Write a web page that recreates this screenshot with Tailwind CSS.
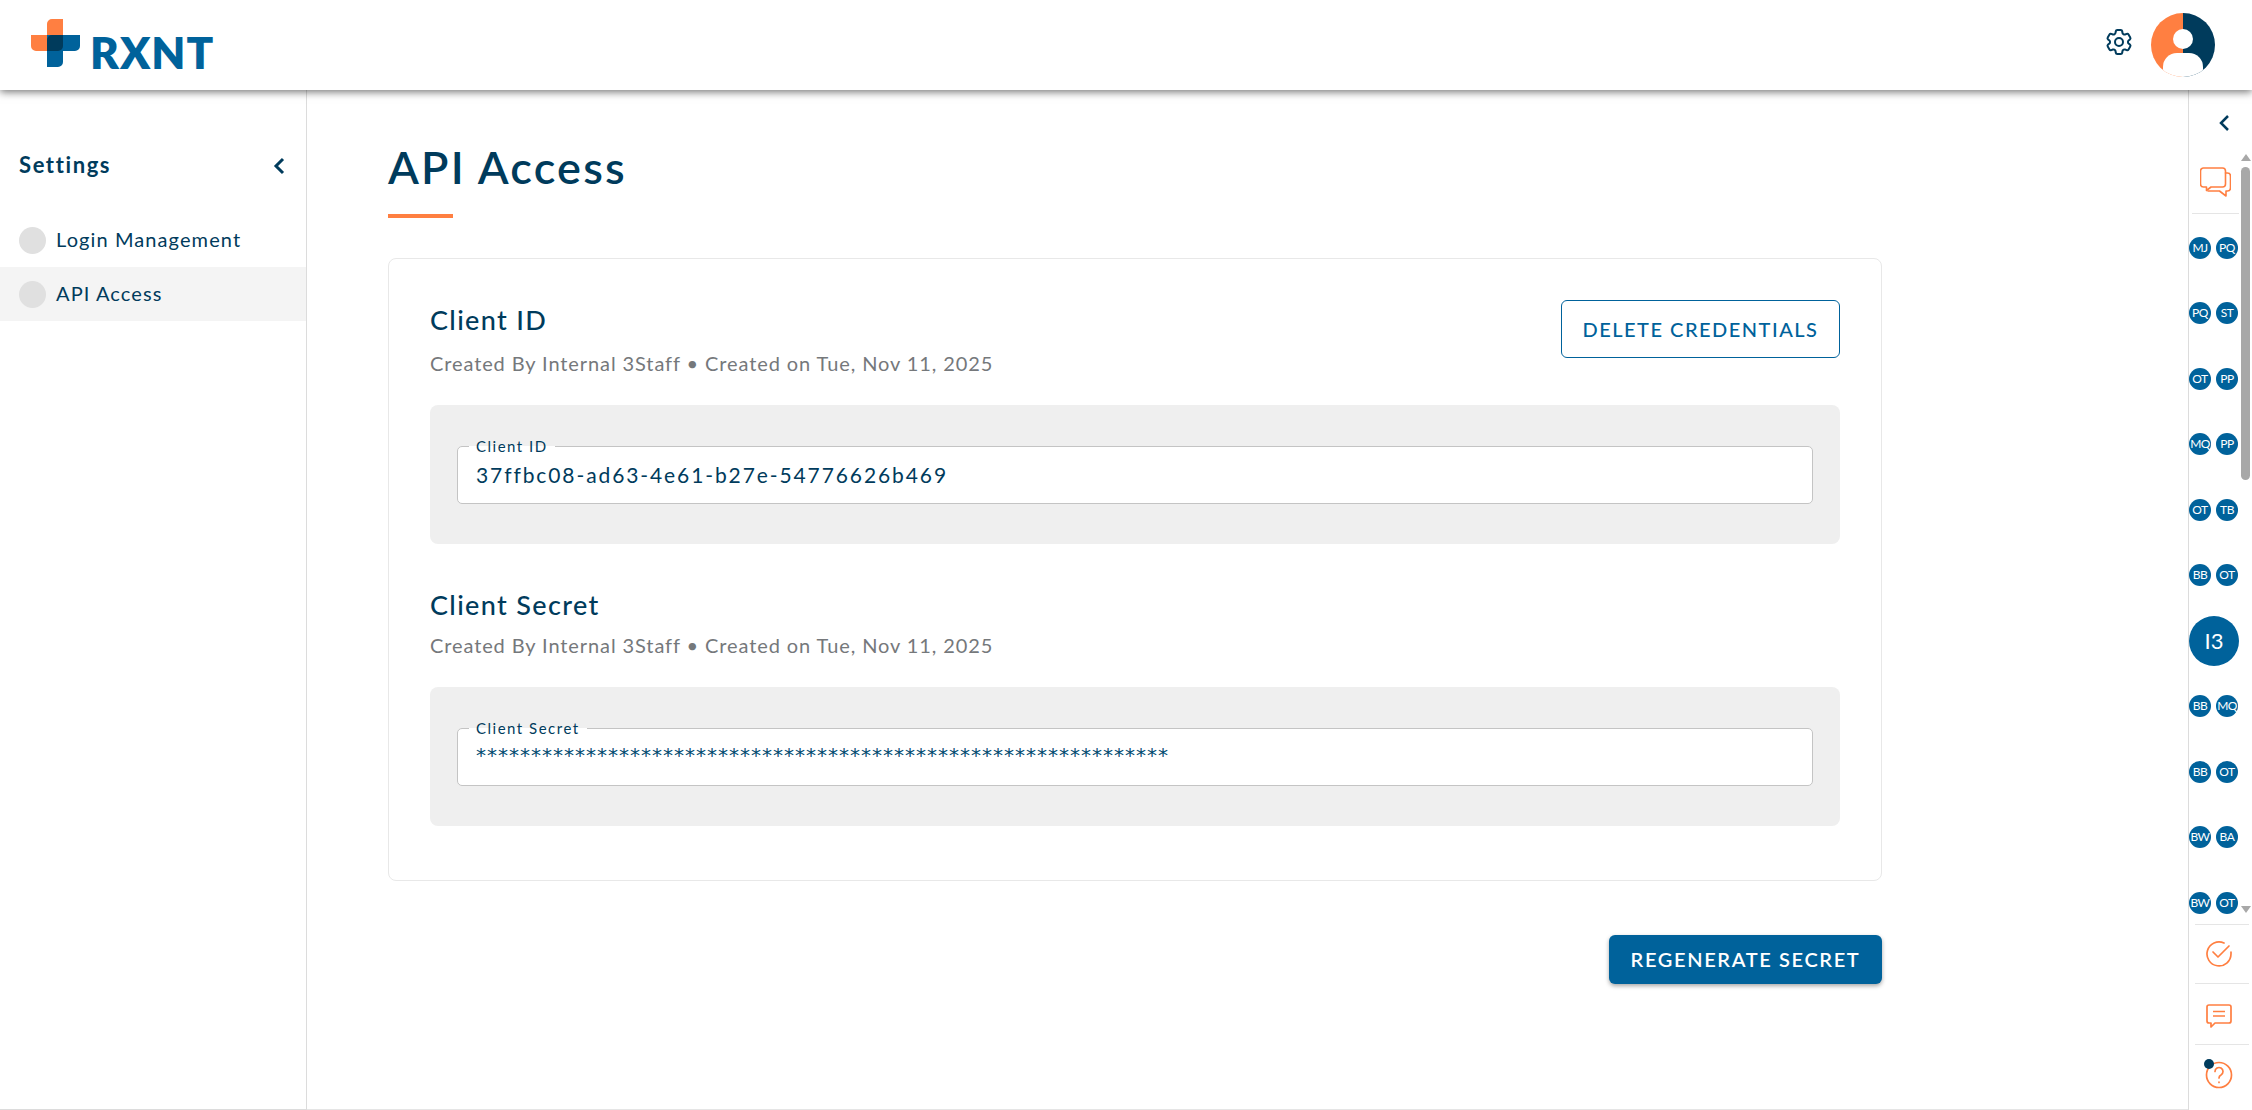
<!DOCTYPE html>
<html lang="en">
<head>
  <meta charset="UTF-8">
  <title>API Access</title>
  <script src="https://cdn.jsdelivr.net/npm/@tailwindcss/browser@4"></script>
</head>
<body class="h-[1110px] w-[2252px] overflow-hidden bg-white font-['Lato','Liberation_Sans',sans-serif] text-[#003b5c]">

  <!-- header -->
  <header class="relative z-10 flex h-[90px] items-center justify-between bg-white pl-[31px] pr-[38px] shadow-[0_2px_8px_rgba(0,0,0,0.55)]">
    <div class="flex items-center gap-[10px]">
      <svg width="49" height="48" viewBox="0 0 49 48" class="-mt-[4px]">
        <path d="M16 16V5a5 5 0 0 1 5-5h11v32H5a5 5 0 0 1-5-5V16z" fill="#ff7f41"/>
        <path d="M16 16h33v11a5 5 0 0 1-5 5H32v11a5 5 0 0 1-5 5H16z" fill="#00629b"/>
        <path d="M21 16h11v11a5 5 0 0 1-5 5H16V21a5 5 0 0 1 5-5z" fill="#003b5c"/>
      </svg>
      <span class="mt-[14px] text-[44px] leading-[44px] font-extrabold tracking-[1px] text-[#00629b]">RXNT</span>
    </div>
    <div class="flex items-center gap-[16px]">
      <svg width="32" height="32" viewBox="0 0 24 24" class="-mt-[6px]" fill="none" stroke="#003b5c" stroke-width="1.5" stroke-linecap="round" stroke-linejoin="round">
        <path d="M9.594 3.94c.09-.542.56-.94 1.11-.94h2.593c.55 0 1.02.398 1.11.94l.213 1.281c.063.374.313.686.645.87.074.04.147.083.22.127.325.196.72.257 1.075.124l1.217-.456a1.125 1.125 0 0 1 1.37.49l1.296 2.247a1.125 1.125 0 0 1-.26 1.431l-1.003.827c-.293.241-.438.613-.43.992a7.723 7.723 0 0 1 0 .255c-.008.378.137.75.43.991l1.004.827c.424.35.534.955.26 1.43l-1.298 2.247a1.125 1.125 0 0 1-1.369.491l-1.217-.456c-.355-.133-.75-.072-1.076.124a6.47 6.47 0 0 1-.22.128c-.331.183-.581.495-.644.869l-.213 1.281c-.09.543-.56.94-1.11.94h-2.594c-.55 0-1.019-.398-1.11-.94l-.213-1.281c-.062-.374-.312-.686-.644-.87a6.52 6.52 0 0 1-.22-.127c-.325-.196-.72-.257-1.076-.124l-1.217.456a1.125 1.125 0 0 1-1.369-.49l-1.297-2.247a1.125 1.125 0 0 1 .26-1.431l1.004-.827c.292-.24.437-.613.43-.991a6.932 6.932 0 0 1 0-.255c.007-.38-.138-.751-.43-.992l-1.004-.827a1.125 1.125 0 0 1-.26-1.43l1.297-2.247a1.125 1.125 0 0 1 1.37-.491l1.216.456c.356.133.751.072 1.076-.124.072-.044.146-.086.22-.128.332-.183.582-.495.644-.869l.214-1.28Z"/>
        <path d="M15 12a3 3 0 1 1-6 0 3 3 0 0 1 6 0Z"/>
      </svg>
      <svg width="64" height="64" viewBox="0 0 64 64" class="-mr-[1px]">
        <defs><clipPath id="av"><circle cx="32" cy="32" r="32"/></clipPath></defs>
        <g clip-path="url(#av)">
          <rect width="32" height="64" fill="#ff7f41"/>
          <rect x="32" width="32" height="64" fill="#003b5c"/>
          <circle cx="32" cy="26" r="10" fill="#fff"/>
          <rect x="12" y="40" width="40" height="30" rx="14" fill="#fff"/>
        </g>
      </svg>
    </div>
  </header>

  <div class="flex h-[1020px]">
    <!-- left nav -->
    <aside class="w-[307px] shrink-0 border-r border-b border-[#dcdcdc]">
      <div class="flex h-[123px] items-start justify-between pl-[19px] pr-[21px] pt-[61px]">
        <span class="text-[22px] leading-[28px] font-bold tracking-[1.6px]">Settings</span>
        <svg width="12" height="18" viewBox="0 0 12 18" class="mt-[6px]" fill="none" stroke="#003b5c" stroke-width="3"><path d="M10 2 3 9l7 7"/></svg>
      </div>
      <nav class="text-[20px] tracking-[1.1px]">
        <a class="flex h-[54px] items-center gap-[10px] pb-[2px] pl-[19px]"><span class="mt-[2px] size-[27px] rounded-full bg-[#e0e0e0]"></span>Login Management</a>
        <a class="flex h-[54px] items-center gap-[10px] bg-[#f4f4f4] pb-[2px] pl-[19px]"><span class="mt-[2px] size-[27px] rounded-full bg-[#e0e0e0]"></span>API Access</a>
      </nav>
    </aside>

    <!-- main -->
    <main class="flex w-[1881px] shrink-0 flex-col border-b border-[#e5e5e5] pl-[81px] pr-[306px]">
      <h1 class="mt-[50px] text-[45px] leading-[54px] font-semibold tracking-[2.2px]">API Access</h1>
      <div class="mt-[20px] h-[4px] w-[65px] bg-[#ff7f41]"></div>

      <section class="mt-[40px] h-[623px] rounded-[8px] border border-[#e8e8e8] px-[41px] pt-[41px]">
        <div class="flex justify-between">
          <div>
            <h2 class="mt-[2px] text-[27px] leading-[36px] font-medium tracking-[1.35px]">Client ID</h2>
            <p class="mt-[11px] text-[20px] leading-[28px] tracking-[0.9px] text-[#75787b]">Created By Internal 3Staff • Created on Tue, Nov 11, 2025</p>
          </div>
          <button class="h-[58px] w-[279px] rounded-[6px] border border-[#00629b] text-[20px] font-medium tracking-[1.5px] text-[#00629b]">DELETE CREDENTIALS</button>
        </div>
        <div class="mt-[28px] flex h-[139px] flex-col justify-center rounded-[8px] bg-[#efefef] px-[27px]">
          <div class="relative flex h-[58px] items-center rounded-[5px] border border-[#c4c4c4] bg-white px-[18px]">
            <label class="absolute -top-[9px] left-[11px] h-[16px] bg-[linear-gradient(to_bottom,#efefef_50%,#fff_50%)] px-[7px] text-[15px] leading-[16px] tracking-[1.5px]">Client ID</label>
            <div class="text-[21px] leading-[28px] tracking-[1.9px]">37ffbc08-ad63-4e61-b27e-54776626b469</div>
          </div>
        </div>

        <h2 class="mt-[43px] text-[27px] leading-[36px] font-medium tracking-[1.35px]">Client Secret</h2>
        <p class="mt-[8px] text-[20px] leading-[28px] tracking-[0.9px] text-[#75787b]">Created By Internal 3Staff • Created on Tue, Nov 11, 2025</p>
        <div class="mt-[28px] flex h-[139px] flex-col justify-center rounded-[8px] bg-[#efefef] px-[27px]">
          <div class="relative flex h-[58px] items-start rounded-[5px] border border-[#c4c4c4] bg-white px-[18px]">
            <label class="absolute -top-[9px] left-[11px] h-[16px] bg-[linear-gradient(to_bottom,#efefef_50%,#fff_50%)] px-[7px] text-[15px] leading-[16px] tracking-[1.5px]">Client Secret</label>
            <div class="mt-[12px] font-['DejaVu_Sans',sans-serif] text-[20px] leading-[28px] tracking-[1px] text-[#00496f]">***************************************************************</div>
          </div>
        </div>
      </section>

      <button class="mt-[54px] h-[49px] w-[273px] self-end rounded-[6px] bg-[#00629b] pb-[2px] text-[20px] font-semibold tracking-[1.65px] text-white shadow-[0_2px_4px_rgba(0,0,0,0.35)]">REGENERATE SECRET</button>
    </main>

    <!-- right rail -->
    <aside class="flex w-[64px] shrink-0 flex-col border-l border-[#dcdcdc]">
      <div class="flex h-[834px]">
        <div class="flex w-[50px] shrink-0 flex-col">
          <div class="flex h-[63px] items-center justify-center pl-[20px] pt-[2px]">
            <svg width="12" height="18" viewBox="0 0 12 18" fill="none" stroke="#003b5c" stroke-width="2.5"><path d="M10 2 3 9l7 7"/></svg>
          </div>
          <div class="ml-[3px] flex h-[61px] shrink-0 items-start justify-center border-b border-[#e5e5e5] pt-[14px]">
            <svg width="31" height="30" viewBox="0 0 31 30" fill="none" stroke="#ff7f41" stroke-width="1.6" stroke-linejoin="round" stroke-linecap="round">
              <path d="M3.500 1h19a3 3 0 0 1 3 3v13a3 3 0 0 1-3 3H11l-4.500 3.500V20h-3a3 3 0 0 1-3-3V4a3 3 0 0 1 3-3z"/>
              <path d="M25.500 6h2a3 3 0 0 1 3 3v12a3 3 0 0 1-3 3h-1.500v5l-6.500-5H8"/>
            </svg>
          </div>
          <div class="flex h-[710px] flex-col overflow-hidden pt-[1px] text-[12px] tracking-[-0.5px] text-white">
            <div class="flex h-[65.5px] shrink-0 items-center gap-[5px]"><span class="flex size-[22px] items-center justify-center rounded-full bg-[#00629b]">MJ</span><span class="flex size-[22px] items-center justify-center rounded-full bg-[#00629b]">PQ</span></div>
            <div class="flex h-[65.5px] shrink-0 items-center gap-[5px]"><span class="flex size-[22px] items-center justify-center rounded-full bg-[#00629b]">PQ</span><span class="flex size-[22px] items-center justify-center rounded-full bg-[#00629b]">ST</span></div>
            <div class="flex h-[65.5px] shrink-0 items-center gap-[5px]"><span class="flex size-[22px] items-center justify-center rounded-full bg-[#00629b]">OT</span><span class="flex size-[22px] items-center justify-center rounded-full bg-[#00629b]">PP</span></div>
            <div class="flex h-[65.5px] shrink-0 items-center gap-[5px]"><span class="flex size-[22px] items-center justify-center rounded-full bg-[#00629b]">MQ</span><span class="flex size-[22px] items-center justify-center rounded-full bg-[#00629b]">PP</span></div>
            <div class="flex h-[65.5px] shrink-0 items-center gap-[5px]"><span class="flex size-[22px] items-center justify-center rounded-full bg-[#00629b]">OT</span><span class="flex size-[22px] items-center justify-center rounded-full bg-[#00629b]">TB</span></div>
            <div class="flex h-[65.5px] shrink-0 items-center gap-[5px]"><span class="flex size-[22px] items-center justify-center rounded-full bg-[#00629b]">BB</span><span class="flex size-[22px] items-center justify-center rounded-full bg-[#00629b]">OT</span></div>
            <div class="flex h-[65.5px] shrink-0 items-center"><span class="flex size-[50px] items-center justify-center rounded-full bg-[#00629b] text-[22px] font-normal tracking-normal">I3</span></div>
            <div class="flex h-[65.5px] shrink-0 items-center gap-[5px]"><span class="flex size-[22px] items-center justify-center rounded-full bg-[#00629b]">BB</span><span class="flex size-[22px] items-center justify-center rounded-full bg-[#00629b]">MQ</span></div>
            <div class="flex h-[65.5px] shrink-0 items-center gap-[5px]"><span class="flex size-[22px] items-center justify-center rounded-full bg-[#00629b]">BB</span><span class="flex size-[22px] items-center justify-center rounded-full bg-[#00629b]">OT</span></div>
            <div class="flex h-[65.5px] shrink-0 items-center gap-[5px]"><span class="flex size-[22px] items-center justify-center rounded-full bg-[#00629b]">BW</span><span class="flex size-[22px] items-center justify-center rounded-full bg-[#00629b]">BA</span></div>
            <div class="flex h-[65.5px] shrink-0 items-center gap-[5px]"><span class="flex size-[22px] items-center justify-center rounded-full bg-[#00629b]">BW</span><span class="flex size-[22px] items-center justify-center rounded-full bg-[#00629b]">OT</span></div>
          </div>
        </div>
        <!-- scrollbar -->
        <div class="flex w-[13px] flex-col items-center pt-[64px]">
          <div class="h-0 w-0 border-x-[5px] border-b-[7px] border-x-transparent border-b-[#a8a8a8]"></div>
          <div class="mt-[6px] h-[313px] w-[9px] rounded-full bg-[#a8a8a8]"></div>
          <div class="mt-[426px] h-0 w-0 border-x-[5px] border-t-[7px] border-x-transparent border-t-[#a8a8a8]"></div>
        </div>
      </div>
      <!-- bottom actions -->
      <div class="ml-[6px] mr-[3px] flex h-[60px] items-center justify-center border-y border-[#e5e5e5] pr-[6px]">
        <svg width="28" height="28" viewBox="0 0 28 28" fill="none" stroke="#ff7f41" stroke-width="1.7" stroke-linecap="round" stroke-linejoin="round">
          <path d="M26 12v2a12 12 0 1 1-7-11"/><path d="m8 12 5 5 11-11"/>
        </svg>
      </div>
      <div class="ml-[6px] mr-[3px] flex h-[61px] items-center justify-center border-b border-[#e5e5e5] pr-[6px] pt-[3px]">
        <svg width="28" height="26" viewBox="0 0 28 26" fill="none" stroke="#ff7f41" stroke-width="1.7" stroke-linejoin="round">
          <path d="M4 2h20a2 2 0 0 1 2 2v14a2 2 0 0 1-2 2H10l-4 4v-4H4a2 2 0 0 1-2-2V4a2 2 0 0 1 2-2z"/>
          <path d="M8 8.500h12M8 13h12"/>
        </svg>
      </div>
      <div class="relative ml-[6px] mr-[3px] flex h-[60px] items-center justify-center pr-[6px]">
        <svg width="28" height="28" viewBox="0 0 28 28" fill="none" stroke="#ff7f41" stroke-width="1.7" stroke-linecap="round">
          <circle cx="14" cy="14" r="12.500"/><path d="M10 10.500a4 4 0 1 1 6 3.500c-1.500.8-2 1.500-2 3"/><path d="M14 21v.5"/>
        </svg>
        <span class="absolute left-[9px] top-[14px] size-[10px] rounded-full bg-[#003b5c]"></span>
      </div>
    </aside>
  </div>
</body>
</html>
